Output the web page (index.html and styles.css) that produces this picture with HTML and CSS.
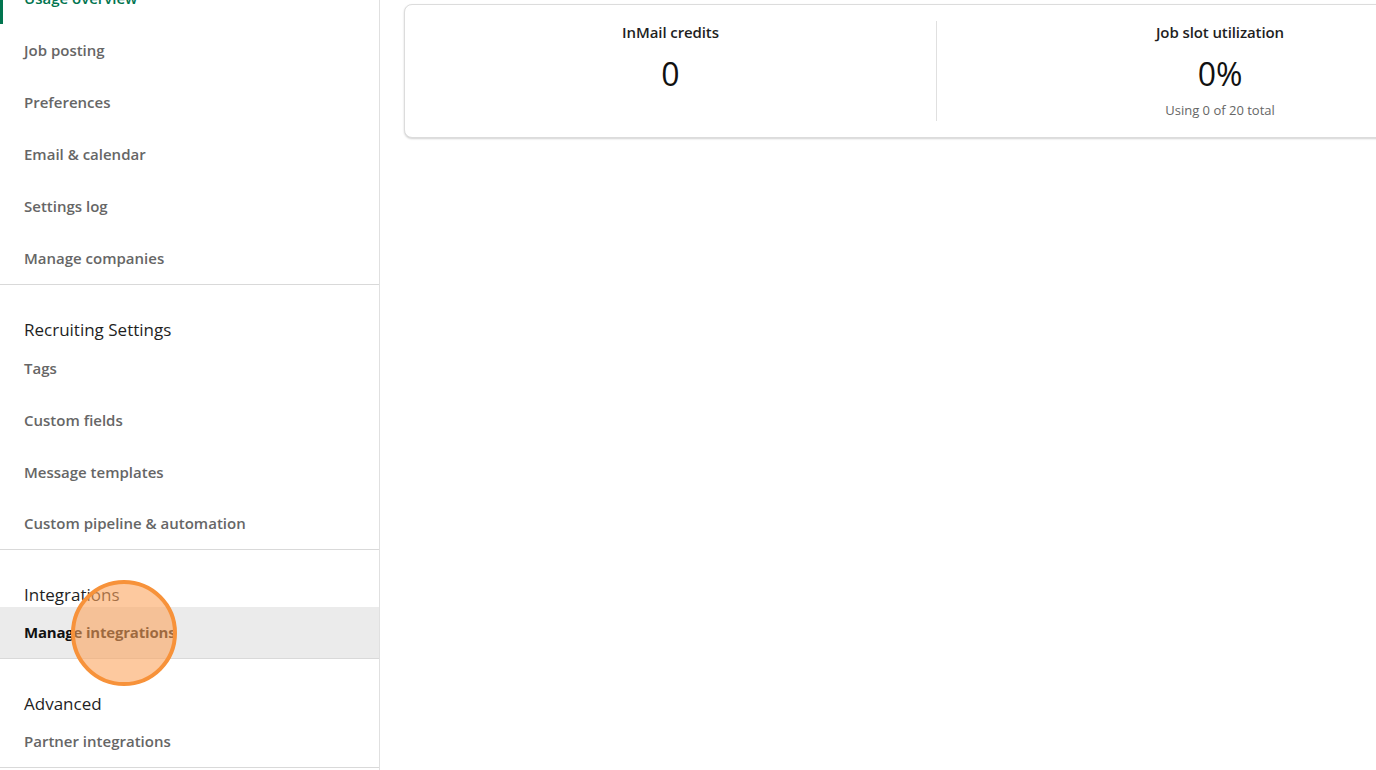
FILE: index.html
```html
<!DOCTYPE html>
<html lang="en">
<head>
<meta charset="utf-8">
<title>Settings</title>
<link rel="stylesheet" href="styles.css">
</head>
<body>
<div class="page">
  <nav class="sidebar">
    <section class="nav-section first">
      <a class="nav-item active">Usage overview</a>
      <a class="nav-item">Job posting</a>
      <a class="nav-item">Preferences</a>
      <a class="nav-item">Email &amp; calendar</a>
      <a class="nav-item">Settings log</a>
      <a class="nav-item">Manage companies</a>
    </section>
    <section class="nav-section">
      <h2 class="nav-heading">Recruiting Settings</h2>
      <a class="nav-item">Tags</a>
      <a class="nav-item">Custom fields</a>
      <a class="nav-item">Message templates</a>
      <a class="nav-item">Custom pipeline &amp; automation</a>
    </section>
    <section class="nav-section">
      <h2 class="nav-heading">Integrations</h2>
      <a class="nav-item selected">Manage integrations</a>
    </section>
    <section class="nav-section">
      <h2 class="nav-heading">Advanced</h2>
      <a class="nav-item">Partner integrations</a>
    </section>
  </nav>
  <main class="main">
    <div class="card">
      <div class="stat">
        <div class="stat-title">InMail credits</div>
        <div class="stat-value">0</div>
      </div>
      <div class="stat">
        <div class="stat-title">Job slot utilization</div>
        <div class="stat-value">0%</div>
        <div class="stat-note">Using 0 of 20 total</div>
      </div>
    </div>
  </main>
</div>
<div class="click-marker"></div>
</body>
</html>
```
FILE: styles.css
```css
* { box-sizing: border-box; }
html, body {
  margin: 0;
  padding: 0;
  height: 100%;
  overflow: hidden;
  background: #fff;
}
body {
  font-family: "Open Sans", "Noto Sans", sans-serif;
  color: #191919;
}
.page {
  display: flex;
  height: 770px;
}
.sidebar {
  width: 380px;
  flex: 0 0 380px;
  border-right: 1px solid #e0e0e0;
  margin-top: -28px;
  display: flex;
  flex-direction: column;
}
.nav-section {
  display: flex;
  flex-direction: column;
  border-bottom: 1px solid #d9d9d9;
}
.nav-heading {
  margin: 0;
  padding: 33px 24px 0;
  font-size: 17px;
  line-height: 24px;
  font-weight: 400;
  color: #1f1f1f;
}
.nav-item {
  display: flex;
  align-items: center;
  height: 52px;
  padding: 0 24px 1px;
  font-size: 15px;
  font-weight: 600;
  color: #666666;
}
.nav-item.active {
  color: #01754f;
  box-shadow: inset 3px 0 0 #01754f;
}
.nav-item.selected {
  background: #ebebeb;
  color: #111;
  font-weight: 700;
  letter-spacing: -0.2px;
}
.nav-section:not(.first) .nav-item:last-child { height: 51px; }
.main {
  flex: 1;
  min-width: 0;
  padding: 4px 0 0 24px;
  overflow: hidden;
}
.card {
  width: 1100px;
  height: 134px;
  border: 1px solid #dcdcdc;
  border-radius: 8px;
  box-shadow: 0 1px 2px rgba(0,0,0,0.18);
  display: grid;
  grid-template-columns: 531px 1fr;
  padding: 16px 0;
  background: #fff;
}
.stat {
  display: flex;
  flex-direction: column;
  align-items: center;
}
.stat + .stat {
  border-left: 1px solid #e0e0e0;
}
.stat-title {
  font-size: 15px;
  font-weight: 600;
  line-height: 22px;
  color: #1f1f1f;
  letter-spacing: -0.1px;
}
.stat-value {
  font-size: 32px;
  line-height: 44px;
  margin-top: 9px;
  font-weight: 400;
  color: #111;
}
.stat-note {
  font-size: 13px;
  line-height: 18px;
  margin-top: 5px;
  color: #666;
}
.click-marker {
  position: absolute;
  left: 71px;
  top: 580px;
  width: 106px;
  height: 106px;
  border-radius: 50%;
  border: 4px solid #f7923a;
  background: rgba(252, 165, 95, 0.6);
}
```
